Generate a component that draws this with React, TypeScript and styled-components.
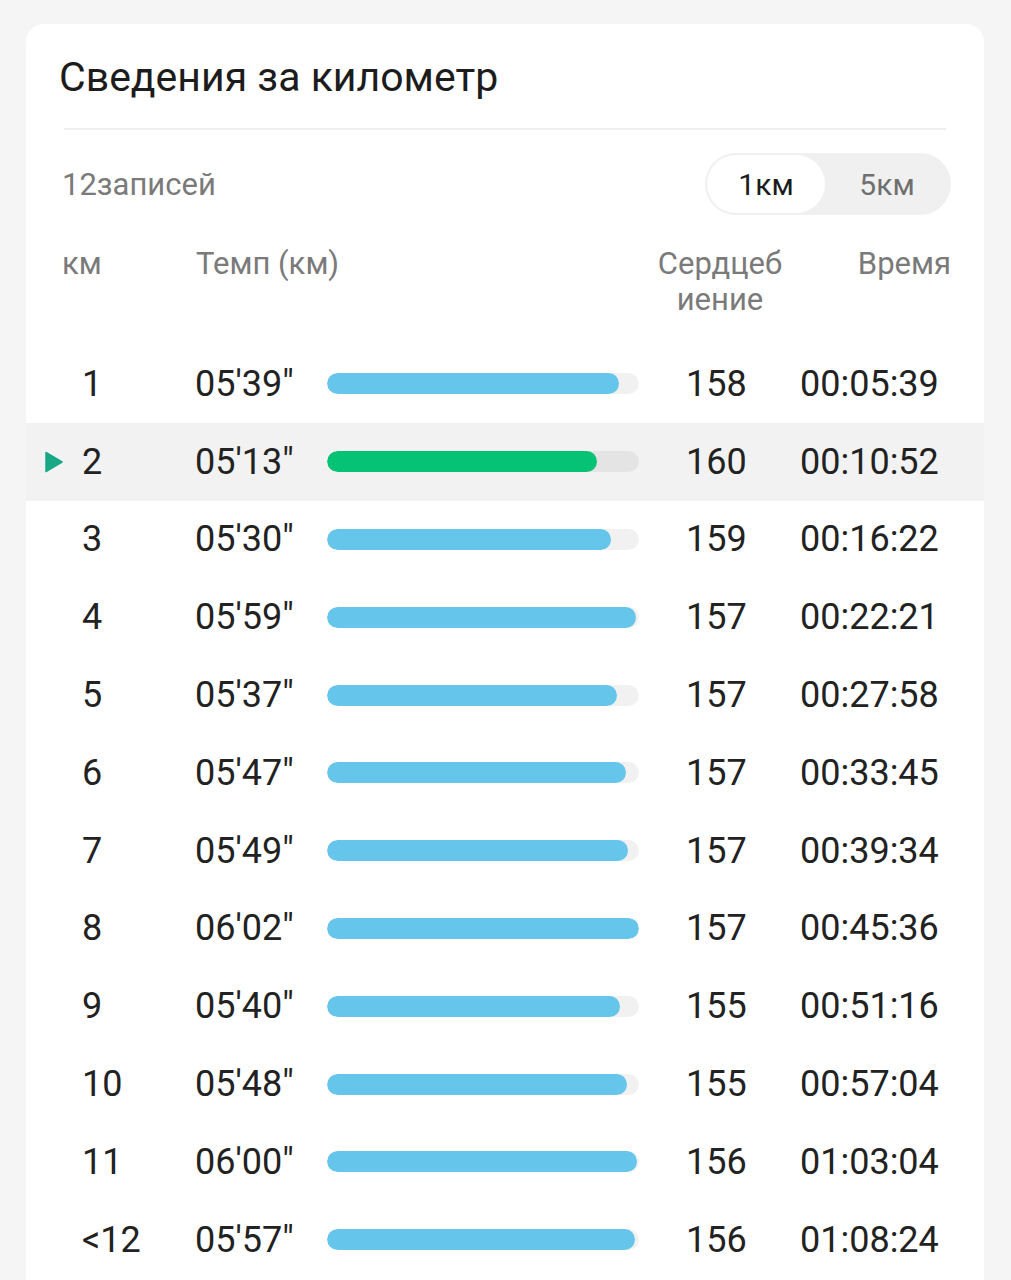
import React from "react";
import styled, { createGlobalStyle } from "styled-components";

const GlobalStyle = createGlobalStyle`
  html, body {
    margin: 0;
    padding: 0;
    background: #f5f5f5;
    font-family: Roboto, "Noto Sans", "Liberation Sans", sans-serif;
  }
  * { box-sizing: border-box; }
`;

const Page = styled.div`
  padding: 24px 26px 0 26px;
  min-height: 1280px;
`;

const Card = styled.section`
  background: #ffffff;
  border-radius: 18px 18px 0 0;
  width: 958px;
  min-height: 1256px;
  padding-top: 30px;
  display: flex;
  flex-direction: column;
`;

const Title = styled.h1`
  margin: 0;
  padding-left: 33px;
  font-size: 41px;
  line-height: 46px;
  font-weight: 400;
  color: #1c1c1c;
`;

const Divider = styled.div`
  margin: 28px 38px 0 38px;
  height: 2px;
  background: #efefef;
`;

const SubHeader = styled.div`
  margin-top: 23px;
  padding: 0 33px 0 36px;
  height: 62px;
  display: flex;
  align-items: center;
  justify-content: space-between;
`;

const Count = styled.span`
  font-size: 31px;
  color: #7a7a7a;
`;

const Toggle = styled.div`
  width: 246px;
  height: 62px;
  border-radius: 31px;
  background: #f0f0f0;
  padding: 2px;
  display: flex;
`;

const ToggleItem = styled.div<{ $active?: boolean }>`
  flex: 0 0 118px;
  height: 58px;
  border-radius: 29px;
  display: flex;
  align-items: center;
  justify-content: center;
  font-size: 30px;
  background: ${(p) => (p.$active ? "#ffffff" : "transparent")};
  color: ${(p) => (p.$active ? "#1c1c1c" : "#6f6f6f")};
  & + & {
    flex: 1;
  }
`;

const HeaderRow = styled.div`
  margin-top: 31px;
  padding: 0 33px 0 36px;
  display: grid;
  grid-template-columns: 134px 430px 188px 1fr;
  font-size: 31px;
  line-height: 36px;
  color: #7a7a7a;
`;

const HeadCell = styled.div<{ $align?: "left" | "center" | "right" }>`
  text-align: ${(p) => p.$align || "left"};
  white-space: nowrap;
`;

const Rows = styled.div`
  margin-top: 27px;
  display: flex;
  flex-direction: column;
`;

const Row = styled.div<{ $active?: boolean }>`
  height: 77.8px;
  display: grid;
  grid-template-columns: 56px 113px 132px 312px 161px 1fr;
  align-items: center;
  background: ${(p) => (p.$active ? "#f2f2f2" : "transparent")};
  font-size: 36px;
  color: #222222;
`;

const ArrowCell = styled.div`
  padding-left: 19px;
  display: flex;
  align-items: center;
`;

const Cell = styled.div<{ $pad?: number }>`
  padding-left: ${(p) => p.$pad || 0}px;
  white-space: nowrap;
`;

const Track = styled.div`
  height: 21px;
  border-radius: 11px;
  background: rgba(0, 0, 0, 0.055);
  overflow: hidden;
`;

const Fill = styled.div<{ $active?: boolean }>`
  height: 100%;
  border-radius: 11px;
  background: ${(p) => (p.$active ? "#06c275" : "#66c5ea")};
`;

const data = [
  { km: "1", pace: "05'39\"", hr: 158, time: "00:05:39", sec: 339 },
  { km: "2", pace: "05'13\"", hr: 160, time: "00:10:52", sec: 313 },
  { km: "3", pace: "05'30\"", hr: 159, time: "00:16:22", sec: 330 },
  { km: "4", pace: "05'59\"", hr: 157, time: "00:22:21", sec: 359 },
  { km: "5", pace: "05'37\"", hr: 157, time: "00:27:58", sec: 337 },
  { km: "6", pace: "05'47\"", hr: 157, time: "00:33:45", sec: 347 },
  { km: "7", pace: "05'49\"", hr: 157, time: "00:39:34", sec: 349 },
  { km: "8", pace: "06'02\"", hr: 157, time: "00:45:36", sec: 362 },
  { km: "9", pace: "05'40\"", hr: 155, time: "00:51:16", sec: 340 },
  { km: "10", pace: "05'48\"", hr: 155, time: "00:57:04", sec: 348 },
  { km: "11", pace: "06'00\"", hr: 156, time: "01:03:04", sec: 360 },
  { km: "<12", pace: "05'57\"", hr: 156, time: "01:08:24", sec: 357 },
];

const maxSec = Math.max(...data.map((d) => d.sec));

export default function App() {
  return (
    <>
      <GlobalStyle />
      <Page>
        <Card>
          <Title>Сведения за километр</Title>
          <Divider />
          <SubHeader>
            <Count>12записей</Count>
            <Toggle>
              <ToggleItem $active>1км</ToggleItem>
              <ToggleItem>5км</ToggleItem>
            </Toggle>
          </SubHeader>
          <HeaderRow>
            <HeadCell>км</HeadCell>
            <HeadCell>Темп (км)</HeadCell>
            <HeadCell $align="center">
              Сердцеб
              <br />
              иение
            </HeadCell>
            <HeadCell $align="right">Время</HeadCell>
          </HeaderRow>
          <Rows>
            {data.map((d, i) => {
              const active = i === 1;
              return (
                <Row key={d.km} $active={active}>
                  <ArrowCell>
                    {active && (
                      <svg width="18" height="22" viewBox="0 0 18 22">
                        <path d="M1 1.5 L17 11 L1 20.5 Z" fill="#17a886" stroke="#17a886" strokeWidth="1.5" strokeLinejoin="round" />
                      </svg>
                    )}
                  </ArrowCell>
                  <Cell>{d.km}</Cell>
                  <Cell>{d.pace}</Cell>
                  <Track>
                    <Fill $active={active} style={{ width: `${(d.sec / maxSec) * 100}%` }} />
                  </Track>
                  <Cell $pad={47}>{d.hr}</Cell>
                  <Cell>{d.time}</Cell>
                </Row>
              );
            })}
          </Rows>
        </Card>
      </Page>
    </>
  );
}
